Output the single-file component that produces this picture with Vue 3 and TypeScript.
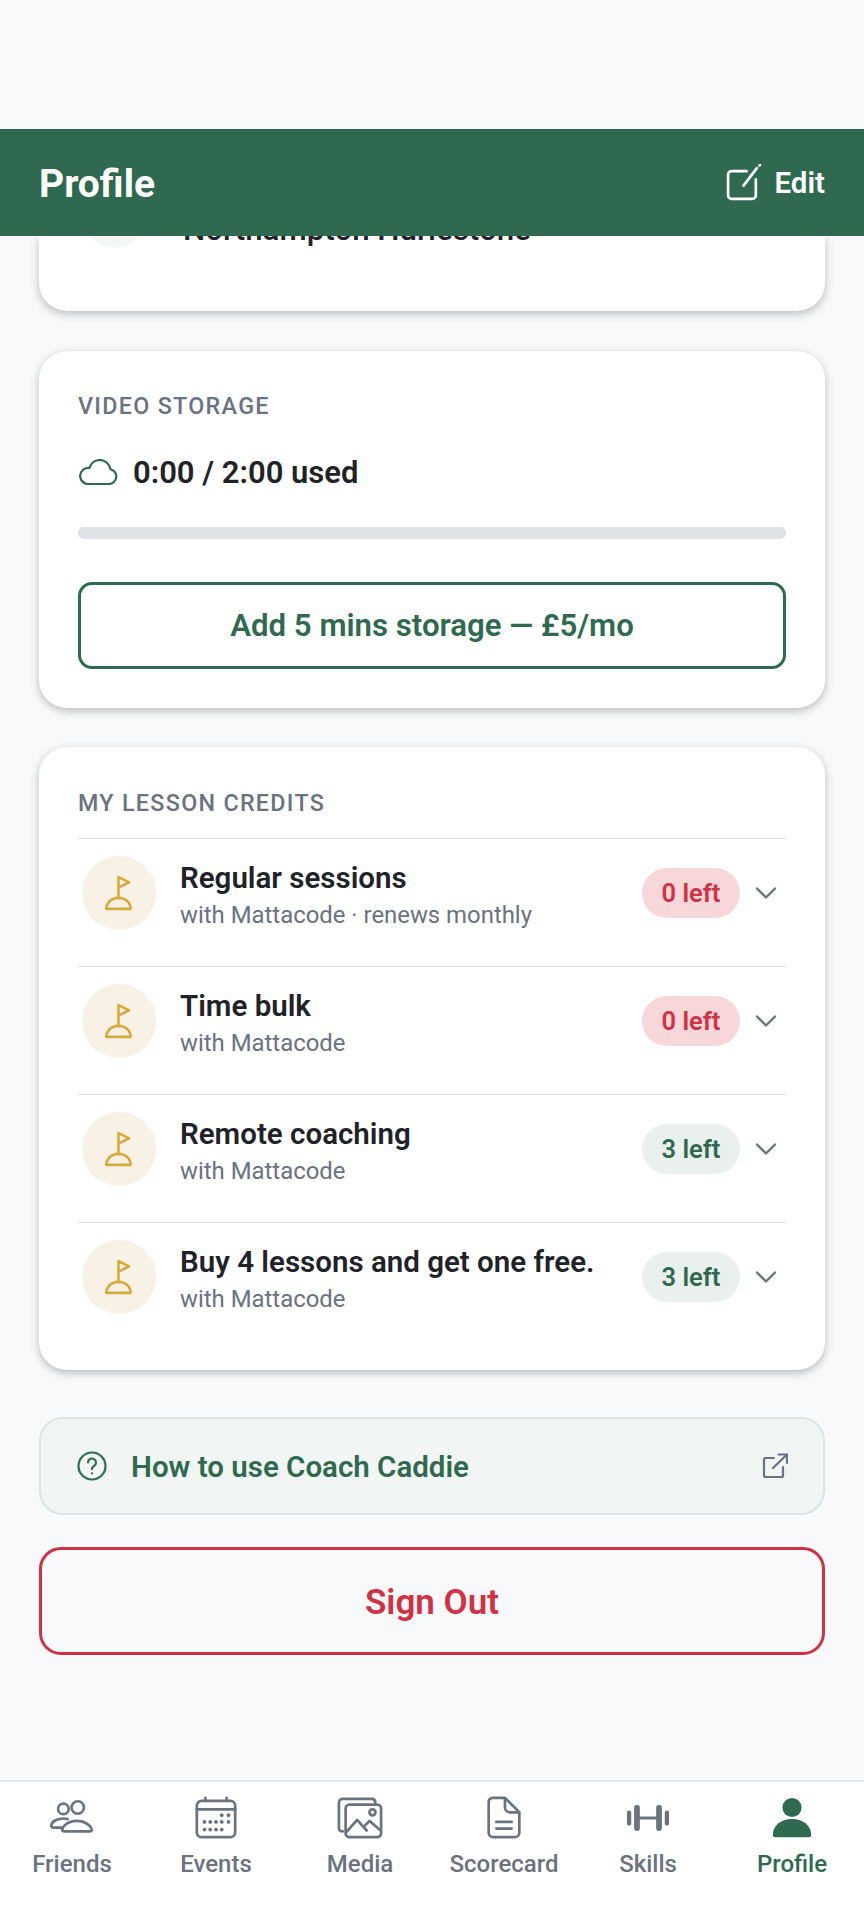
<template>
  <div class="screen">
    <div class="status-space"></div>
    <header class="app-header">
      <h1 class="page-title">Profile</h1>
      <button class="edit-btn">
        <svg class="edit-icon" viewBox="0 0 36 36" fill="none" stroke="currentColor" stroke-width="2.6" stroke-linecap="round" stroke-linejoin="round">
          <path d="M21 7H6.500A3.500 3.500 0 0 0 3 10.500v20A3.500 3.500 0 0 0 6.500 34h20a3.500 3.500 0 0 0 3.500-3.500V15" />
          <path d="M18 21 31 4" />
          <path d="M33.500 1.500 34 1" />
        </svg>
        <span>Edit</span>
      </button>
    </header>

    <main class="content">
      <section class="card club-card">
        <div class="club-row">
          <div class="club-avatar"></div>
          <span class="club-name">Northampton Hurlestone</span>
        </div>
      </section>

      <section class="card storage-card">
        <div class="section-label">VIDEO STORAGE</div>
        <div class="storage-used">
          <svg class="cloud-icon" viewBox="0 0 40 26" fill="none" stroke="currentColor" stroke-width="2.200" stroke-linejoin="round">
            <path d="M9 25h22a7.500 7.500 0 0 0 1.500-14.800A11 11 0 0 0 22 1a11 11 0 0 0-10.500 8A8 8 0 0 0 9 25Z" />
          </svg>
          <span>0:00 / 2:00 used</span>
        </div>
        <div class="progress"></div>
        <button class="add-btn">Add 5 mins storage — £5/mo</button>
      </section>

      <section class="card credits-card">
        <div class="section-label">MY LESSON CREDITS</div>
        <div v-for="credit in credits" :key="credit.title" class="credit-row">
          <div class="flag-circle">
            <svg viewBox="0 0 30 34" fill="none" stroke="currentColor" stroke-width="2.400" stroke-linecap="round" stroke-linejoin="round">
              <path d="M14.500 22V2l10 5-10 5" />
              <path d="M3 32c0-6 5-10.500 11.500-10.500S26 26 26 32Z" />
            </svg>
          </div>
          <div class="credit-text">
            <div class="credit-title">{{ credit.title }}</div>
            <div class="credit-sub">{{ credit.sub }}</div>
          </div>
          <span class="pill" :class="{ empty: credit.left === 0 }">{{ credit.left }} left</span>
          <svg class="chevron" viewBox="0 0 22 14" fill="none" stroke="currentColor" stroke-width="2.400" stroke-linecap="round" stroke-linejoin="round">
            <path d="M2 2.500 11 11.500 20 2.500" />
          </svg>
        </div>
      </section>

      <a class="help-link">
        <svg class="help-icon" viewBox="0 0 30 30" fill="none" stroke="currentColor" stroke-width="2.200" stroke-linecap="round" stroke-linejoin="round">
          <circle cx="15" cy="15" r="13.500" />
          <path d="M11 11.500a4 4 0 1 1 6 3.500c-1.300.8-2 1.500-2 3" />
          <path d="M15 22.300v.2" />
        </svg>
        <span class="help-text">How to use Coach Caddie</span>
        <svg class="external-icon" viewBox="0 0 26 26" fill="none" stroke="currentColor" stroke-width="2.200" stroke-linecap="round" stroke-linejoin="round">
          <path d="M12 5H3.500A1.500 1.500 0 0 0 2 6.500v16A1.500 1.500 0 0 0 3.500 24h16a1.500 1.500 0 0 0 1.500-1.500V14" />
          <path d="M11 15 25 1.500" />
          <path d="M16.500 1.500H25V10" />
        </svg>
      </a>

      <button class="sign-out">Sign Out</button>
    </main>

    <nav class="tab-bar">
      <div v-for="tab in tabs" :key="tab.label" class="tab" :class="{ active: tab.label === 'Profile' }">
        <svg class="tab-icon" viewBox="0 0 48 48" fill="none" stroke="currentColor" stroke-width="2.800" stroke-linecap="round" stroke-linejoin="round">
          <template v-if="tab.label === 'Friends'">
            <circle cx="15" cy="13.500" r="5.500" />
            <circle cx="30" cy="12" r="6.500" />
            <path d="M13 33H5c-2 0-3-1-2.500-3C3.500 26 9 23.500 15 23.500c1.500 0 3 .2 4.500.6" />
            <path d="M16 37c-2 0-2.500-1-2-2.500 1.500-5 8-8.500 15-8.500s14 3.500 15.500 8.500c.5 1.500 0 2.500-2 2.500Z" />
          </template>
          <template v-else-if="tab.label === 'Events'">
            <rect x="4" y="5" width="40" height="38" rx="5" />
            <path d="M4 14h40M13 2v3M35 2v3" />
            <g fill="currentColor" stroke="none">
              <circle v-for="d in calendarDots" :key="d[0] + '-' + d[1]" :cx="d[0]" :cy="d[1]" r="2" />
            </g>
          </template>
          <template v-else-if="tab.label === 'Media'">
            <path d="M6 37c-2.500 0-4-1.500-4-4V7c0-2.500 1.500-4 4-4h30c2.500 0 4 1.500 4 4" />
            <rect x="9" y="9" width="37" height="34" rx="4" />
            <path d="M9.500 38 21 25l10 11M28 32l6-6 11.500 10" />
            <circle cx="37" cy="17" r="3.200" />
          </template>
          <template v-else-if="tab.label === 'Scorecard'">
            <path d="M12 2h13l15 15v21a5 5 0 0 1-5 5H13a5 5 0 0 1-5-5V6a4 4 0 0 1 4-4Z" />
            <path d="M25 3v9a5 5 0 0 0 5 5h9" />
            <path d="M16 27h16M16 34h16" />
          </template>
          <template v-else-if="tab.label === 'Skills'">
            <path d="M13 23h22" stroke-width="3" />
            <rect x="9.500" y="9.500" width="6" height="27" rx="3" fill="currentColor" stroke="none" />
            <rect x="32.500" y="9.500" width="6" height="27" rx="3" fill="currentColor" stroke="none" />
            <rect x="2" y="15" width="4.500" height="16" rx="2.200" fill="currentColor" stroke="none" />
            <rect x="41.500" y="15" width="4.500" height="16" rx="2.200" fill="currentColor" stroke="none" />
          </template>
          <template v-else>
            <g fill="currentColor" stroke="none">
              <circle cx="24" cy="12" r="10" />
              <path d="M4 41c0-10 8-17 20-17s20 7 20 17c0 1.500-1 2-2 2H6c-1 0-2-.5-2-2Z" />
            </g>
          </template>
        </svg>
        <span class="tab-label">{{ tab.label }}</span>
      </div>
    </nav>
  </div>
</template>

<script setup lang="ts">
interface Credit {
  title: string
  sub: string
  left: number
}

const credits: Credit[] = [
  { title: 'Regular sessions', sub: 'with Mattacode · renews monthly', left: 0 },
  { title: 'Time bulk', sub: 'with Mattacode', left: 0 },
  { title: 'Remote coaching', sub: 'with Mattacode', left: 3 },
  { title: 'Buy 4 lessons and get one free.', sub: 'with Mattacode', left: 3 },
]

const tabs = [
  { label: 'Friends' },
  { label: 'Events' },
  { label: 'Media' },
  { label: 'Scorecard' },
  { label: 'Skills' },
  { label: 'Profile' },
]

const calendarDots = [
  [30, 20], [37, 20],
  [12, 27], [18, 27], [24, 27], [30, 27], [37, 27],
  [12, 35], [18, 35], [24, 35], [30, 35],
]
</script>

<style>
html,
body {
  margin: 0;
  background: #f8f9fb;
}
</style>

<style scoped>
.screen {
  width: 864px;
  height: 1923px;
  display: flex;
  flex-direction: column;
  background: #f8f9fb;
  font-family: Roboto, "Liberation Sans", sans-serif;
  overflow: hidden;
}

.status-space {
  height: 129px;
}

.app-header {
  height: 107px;
  flex: none;
  background: #2f6a50;
  color: #fff;
  display: flex;
  align-items: center;
  justify-content: space-between;
  padding: 0 39px;
  position: relative;
  z-index: 2;
}

.page-title {
  margin: 2px 0 0;
  font-size: 39px;
  font-weight: 700;
}

.edit-btn {
  display: flex;
  align-items: center;
  gap: 12px;
  padding: 0;
  background: none;
  border: 0;
  color: #fff;
  font: 600 29.500px Roboto, sans-serif;
}

.edit-icon {
  width: 37px;
  height: 37px;
}

.content {
  flex: 1;
  padding: 0 39px;
  display: flex;
  flex-direction: column;
}

.card {
  background: #fff;
  border-radius: 28px;
  box-shadow: 0 3px 8px rgba(0, 0, 0, 0.25);
}

.club-card {
  height: 75px;
  overflow: hidden;
  border-radius: 0 0 28px 28px;
}

.club-row {
  display: flex;
  align-items: flex-start;
  padding-left: 44px;
  margin-top: -52px;
  gap: 36px;
}

.club-avatar {
  width: 64px;
  height: 64px;
  border-radius: 50%;
  background: #f5f7f6;
  flex: none;
}

.club-name {
  font-size: 31.300px;
  font-weight: 500;
  line-height: 38px;
  margin-top: 27px;
  color: #1f2328;
}

.storage-card {
  margin-top: 40px;
  height: 357px;
  padding: 42px 39px 0;
  box-sizing: border-box;
}

.section-label {
  font-size: 23.300px;
  font-weight: 500;
  letter-spacing: 1.300px;
  line-height: 26px;
  color: #6b7280;
}

.storage-used {
  display: flex;
  align-items: center;
  gap: 15px;
  margin-top: 34px;
  font-size: 31px;
  font-weight: 600;
  line-height: 40px;
  color: #1f2328;
}

.cloud-icon {
  width: 40px;
  height: 26px;
  margin-top: -2px;
  color: #2f6a50;
}

.progress {
  height: 12px;
  border-radius: 6px;
  background: #dfe2e7;
  margin-top: 34px;
}

.add-btn {
  width: 100%;
  height: 87px;
  margin-top: 43px;
  background: #fff;
  border: 3px solid #2f6a50;
  border-radius: 14px;
  color: #2f6a50;
  font: 600 31.200px Roboto, sans-serif;
}

.credits-card {
  margin-top: 39px;
  height: 623px;
  padding: 43px 39px 0;
  box-sizing: border-box;
}

.credits-card .section-label {
  margin-bottom: 22px;
}

.credit-row {
  height: 128px;
  box-sizing: border-box;
  border-top: 1.500px solid #dfe1e4;
  display: flex;
  align-items: center;
  padding: 0 0 20px 4px;
}

.flag-circle {
  width: 74px;
  height: 74px;
  flex: none;
  border-radius: 50%;
  background: #f7f2e5;
  color: #d9a93c;
  display: flex;
  align-items: center;
  justify-content: center;
}

.flag-circle svg {
  width: 32px;
  height: 36px;
}

.credit-text {
  flex: 1;
  margin-left: 24px;
  padding-top: 4px;
}

.credit-title {
  font-size: 29.500px;
  font-weight: 600;
  line-height: 36px;
  color: #1f2328;
}

.credit-sub {
  font-size: 23.900px;
  line-height: 30px;
  margin-top: 4px;
  color: #6b7280;
}

.pill {
  width: 98px;
  height: 50px;
  border-radius: 25px;
  display: flex;
  align-items: center;
  justify-content: center;
  background: #e9f0ed;
  color: #2f6a50;
  font-size: 25.500px;
  font-weight: 600;
}

.pill.empty {
  background: #f8d7da;
  color: #d23143;
}

.chevron {
  width: 22px;
  height: 14px;
  margin: 0 9px 0 15px;
  color: #6b7280;
}

.help-link {
  margin-top: 47px;
  height: 98px;
  box-sizing: border-box;
  background: #f1f6f4;
  border: 2px solid #dbe5e1;
  border-radius: 24px;
  display: flex;
  align-items: center;
  padding: 0 35px 0 36px;
}

.help-icon {
  width: 30px;
  height: 30px;
  color: #2f6a50;
}

.help-text {
  flex: 1;
  margin: 2px 0 0 24px;
  font-size: 29.500px;
  font-weight: 600;
  color: #2f6a50;
}

.external-icon {
  width: 26px;
  height: 26px;
  color: #6b7280;
}

.sign-out {
  margin-top: 32px;
  height: 108px;
  padding-top: 3px;
  background: none;
  border: 3px solid #d23143;
  border-radius: 22px;
  color: #d23143;
  font: 600 35px Roboto, sans-serif;
}

.tab-bar {
  flex: none;
  height: 143px;
  background: #fff;
  border-top: 2px solid #e3e5e8;
  box-sizing: border-box;
  display: flex;
  padding-top: 14px;
}

.tab {
  flex: 1;
  display: flex;
  flex-direction: column;
  align-items: center;
  color: #6b7280;
}

.tab.active {
  color: #2f6a50;
}

.tab-icon {
  width: 46px;
  height: 46px;
}

.tab-label {
  margin-top: 7px;
  font-size: 24px;
  font-weight: 500;
  line-height: 30px;
}
</style>
